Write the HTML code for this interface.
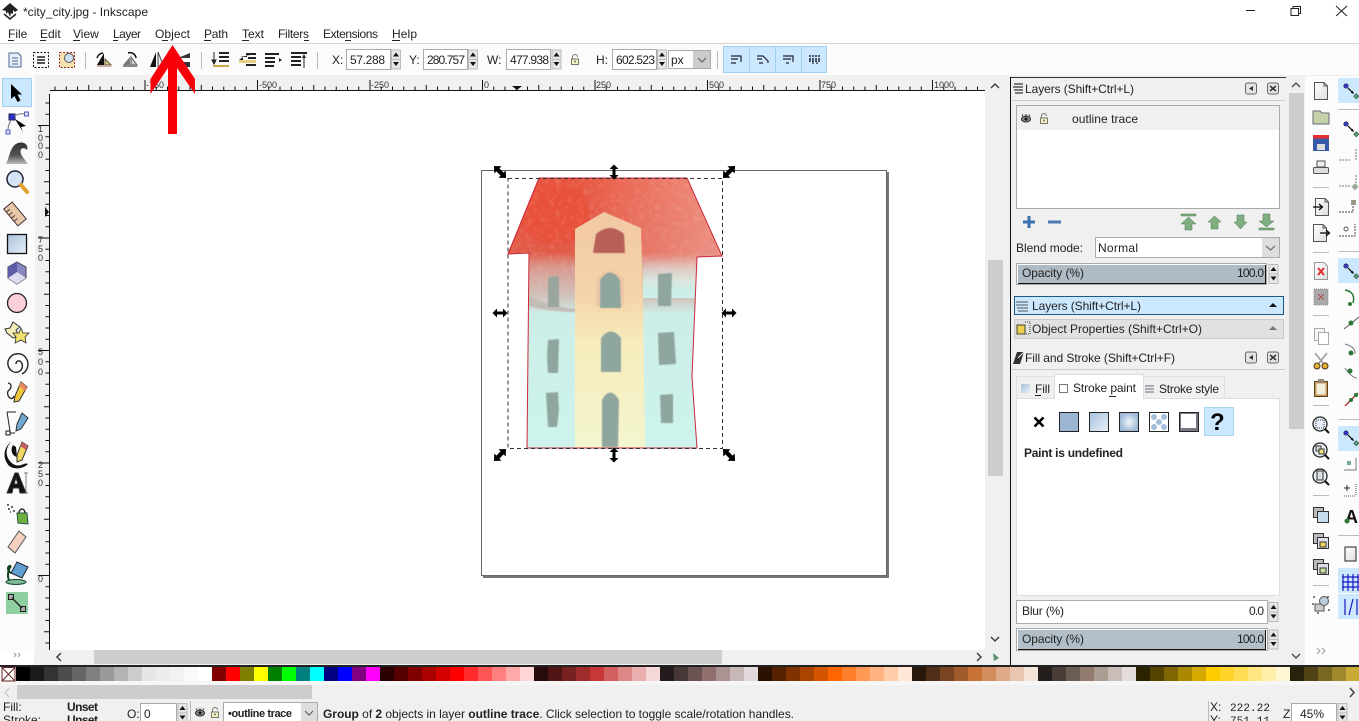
<!DOCTYPE html>
<html><head><meta charset="utf-8"><title>Inkscape</title>
<style>
html,body{margin:0;padding:0;background:#fff;width:1359px;height:721px;overflow:hidden}
svg{display:block;position:absolute;left:0;top:0}
text{font-family:"Liberation Sans",sans-serif;font-size:12px;fill:#222}
.m{font-family:"Liberation Mono",monospace;font-size:11px}
.b{font-weight:bold}
.r{font-size:9px;fill:#333}
</style></head><body>
<svg width="1359" height="721" viewBox="0 0 1359 721" xmlns="http://www.w3.org/2000/svg">
<defs>
<pattern id="pt" x="482" y="76" width="112.5" height="15" patternUnits="userSpaceOnUse">
<path d="M.5 4V14M11.75 10.5V14M23 10.5V14M34.25 10.5V14M45.5 10.5V14M56.75 9V14M68 10.5V14M79.25 10.5V14M90.5 10.5V14M101.75 10.5V14" stroke="#111" fill="none"/>
</pattern>
<pattern id="pl" x="35" y="575" width="15" height="112.5" patternUnits="userSpaceOnUse">
<path d="M3 .5H14M10.5 11.75H14M10.5 23H14M10.5 34.25H14M10.5 45.5H14M9 56.75H14M10.5 68H14M10.5 79.25H14M10.5 90.5H14M10.5 101.75H14" stroke="#111" fill="none"/>
</pattern>
<linearGradient id="gBlue" x1="0" y1="0" x2="1" y2="1"><stop offset="0" stop-color="#a9c1dc"/><stop offset="1" stop-color="#e8f0f8"/></linearGradient>
<linearGradient id="gGrey" x1="0" y1="0" x2="0" y2="1"><stop offset="0" stop-color="#333"/><stop offset=".6" stop-color="#555"/><stop offset="1" stop-color="#bbb"/></linearGradient>
<linearGradient id="gDoc" x1="0" y1="0" x2="1" y2="1"><stop offset="0" stop-color="#fff"/><stop offset="1" stop-color="#ddd"/></linearGradient>
<radialGradient id="gRad"><stop offset="0" stop-color="#f4f8fc"/><stop offset="1" stop-color="#9db8d6"/></radialGradient>
<linearGradient id="house" x1="0" y1="178" x2="0" y2="450" gradientUnits="userSpaceOnUse">
<stop offset="0" stop-color="#e8563f"/><stop offset=".27" stop-color="#e25a48"/><stop offset=".33" stop-color="#d99a90"/><stop offset=".44" stop-color="#d0c6be"/><stop offset=".5" stop-color="#cdeee8"/><stop offset="1" stop-color="#cdf4ec"/>
</linearGradient>
<linearGradient id="tower" x1="0" y1="212" x2="0" y2="450" gradientUnits="userSpaceOnUse">
<stop offset="0" stop-color="#f2c8a4"/><stop offset=".35" stop-color="#f4d4a8"/><stop offset=".55" stop-color="#f7ecbc"/><stop offset="1" stop-color="#f3f6cf"/>
</linearGradient>
<linearGradient id="fade" x1="0" y1="0" x2="1" y2="0"><stop offset=".35" stop-color="#fff" stop-opacity="0"/><stop offset="1" stop-color="#f8e0d8" stop-opacity=".42"/></linearGradient>
<linearGradient id="rcyan" x1="0" y1="0" x2="0" y2="1"><stop offset="0" stop-color="#cdf0ea" stop-opacity="0"/><stop offset=".6" stop-color="#cdf0ea" stop-opacity=".85"/><stop offset="1" stop-color="#cdf0ea"/></linearGradient>
<filter id="blur" x="-20%" y="-20%" width="140%" height="140%"><feGaussianBlur stdDeviation="1.500"/></filter>
<filter id="soft" x="-20%" y="-20%" width="140%" height="140%"><feGaussianBlur stdDeviation=".6"/></filter>
<filter id="noise" x="0" y="0" width="100%" height="100%"><feTurbulence type="fractalNoise" baseFrequency=".18" numOctaves="3" seed="4"/><feColorMatrix values="0 0 0 0 1 0 0 0 0 .9 0 0 0 0 .85 0 0 0 1.600 -.75"/></filter>
<clipPath id="hclip"><path d="M539 178H687L722 256L697 257L692 377L697 448H527L529 253L508 254Z"/></clipPath>
<g id="spin"><rect x=".5" y=".5" width="9" height="9.5" fill="#e6e6e6" stroke="#bbb"/><rect x=".5" y="10" width="9" height="9.5" fill="#e6e6e6" stroke="#bbb"/><path d="M5 3L8 7H2ZM5 16.500L2 12.500H8Z" fill="#111"/></g>
<g id="hh"><path d="M-7.500 0L-3 -4.500V-1.500H3V-4.500L7.500 0L3 4.500V1.500H-3V4.500Z" fill="#000"/></g>
<g id="hd"><path d="M-10 0L-3.500 -6V-2.500H3.500V-6L10 0L3.500 6V2.500H-3.500V6Z" fill="#000"/></g>
<g id="doc"><path d="M-6.500 -8.500H3L6.500 -5V8.500H-6.500Z" fill="url(#gDoc)" stroke="#555"/><path d="M3 -8.500V-5H6.500" fill="none" stroke="#555"/></g>
<g id="snap"><circle cx="-5" cy="-5" r="2.200" fill="#3838d0" stroke="#223" stroke-width=".7"/><path d="M-3 -3L2 2" stroke="#000" stroke-width="1.200"/><path d="M3 3L-.2 1.800L1.800 -.2Z" fill="#000"/><rect x="3.500" y="3.500" width="3.500" height="3.500" transform="rotate(45 5.250 5.250)" fill="#5fa080" stroke="#253" stroke-width=".7"/></g>
<g id="close"><rect x="-5.500" y="-5.500" width="11" height="11" rx="2" fill="#e4e4e4" stroke="#666"/></g>
<g id="eye"><ellipse cx="0" cy="0" rx="4.500" ry="3" fill="#888" stroke="#222"/><circle r="1.500" fill="#111"/><path d="M-4 -3L-3 -4.500M0 -3.500V-5M4 -3L3 -4.500" stroke="#333"/></g>
<g id="lock"><rect x="-3.500" y="-1" width="7" height="5.500" fill="#f4f0c8" stroke="#776"/><path d="M-2.500 -1V-3A2.500 2.500 0 0 1 2.500 -3" fill="none" stroke="#776"/><circle cy="1.500" r="1" fill="#776"/></g>
</defs>

<!-- base -->
<rect width="1359" height="721" fill="#f0f0f0"/>
<rect width="1359" height="43" fill="#fff"/>
<rect y="43" width="1359" height="1" fill="#d6d6d6"/>
<rect y="44" width="1359" height="31" fill="#fbfbfb"/>
<rect x="0" y="75" width="35" height="590" fill="#fbfbfb"/>
<rect x="35" y="75" width="950" height="16" fill="#f0f0f0"/>
<rect x="35" y="75" width="15" height="590" fill="#f0f0f0"/>
<rect x="50" y="91" width="935" height="559" fill="#fff"/>
<rect x="52" y="76" width="933" height="15" fill="url(#pt)"/>
<rect x="50" y="90" width="935" height="1" fill="#111"/>
<rect x="35" y="94" width="15" height="556" fill="url(#pl)"/>
<rect x="49" y="94" width="1" height="556" fill="#111"/>

<!-- title -->
<g transform="translate(10 11)"><path d="M0 -8L8 -1L5 1L3 -1L3 3L1 2L0 6L-2 1L-4 3L-4 0L-8 -1Z" fill="#222"/><path d="M-6 3L0 8L6 3" fill="none" stroke="#222" stroke-width="1.500"/></g>
<text x="23" y="16" textLength="125">*city_city.jpg - Inkscape</text>

<!-- menu -->
<text x="8" y="38">File</text><rect x="8" y="40" width="6" height="1" fill="#222"/>
<text x="40" y="38">Edit</text><rect x="40" y="40" width="6" height="1" fill="#222"/>
<text x="73" y="38">View</text><rect x="73" y="40" width="7" height="1" fill="#222"/>
<text x="113" y="38" textLength="28">Layer</text><rect x="113" y="40" width="5" height="1" fill="#222"/>
<text x="155" y="38" textLength="35">Object</text><rect x="162" y="40" width="6" height="1" fill="#222"/>
<text x="204" y="38" textLength="24">Path</text><rect x="204" y="40" width="7" height="1" fill="#222"/>
<text x="242" y="38" textLength="22">Text</text><rect x="242" y="40" width="7" height="1" fill="#222"/>
<text x="278" y="38" textLength="31">Filters</text><rect x="304" y="40" width="5" height="1" fill="#222"/>
<text x="323" y="38" textLength="55">Extensions</text><rect x="345" y="40" width="6" height="1" fill="#222"/>
<text x="392" y="38" textLength="25">Help</text><rect x="392" y="40" width="8" height="1" fill="#222"/>
<!-- window controls -->
<path d="M1246 10.500H1255" stroke="#222"/>
<path d="M1291 8.500H1298.500V15.500H1291ZM1293 8V6.500H1300.500V13.500H1299" fill="none" stroke="#222"/>
<path d="M1336 6L1347 16M1347 6L1336 16" stroke="#222"/>

<!-- toolbar icons -->
<g transform="translate(15 60)"><path d="M-6 -7H3L6 -4V7H-6Z" fill="#e8eff8" stroke="#4a6a90"/><path d="M-3 -2H3M-3 1H3M-3 4H3" stroke="#4a6a90"/></g>
<g transform="translate(41 60)"><rect x="-7.500" y="-7.500" width="15" height="15" fill="none" stroke="#111" stroke-dasharray="2 1.500"/><path d="M-4 -3H4M-4 0H4M-4 3H4" stroke="#555" stroke-width="2"/></g>
<g transform="translate(67 60)"><rect x="-7.500" y="-7.500" width="15" height="15" fill="#f7e2b0" stroke="#922" stroke-dasharray="2 1.500"/><circle cx="2" cy="-2" r="4.500" fill="#cfe0f0" stroke="#556"/></g>
<rect x="85" y="52" width="1" height="17" fill="#bbb"/>
<g transform="translate(104 60)"><path d="M-7 5L0 -7V5Z" fill="#111"/><path d="M1 -1L7 5H1Z" fill="#e8cf80" stroke="#553"/><path d="M-7 -2A7 7 0 0 1 -1 -7" fill="none" stroke="#111" stroke-width="1.500"/><rect x="-7" y="5" width="14" height="2" fill="#caa"/></g>
<g transform="translate(130 60)"><path d="M-7 5L0 -3V5Z" fill="#777"/><path d="M1 -3L7 5H1Z" fill="#ccc" stroke="#555"/><path d="M-2 -7A6 6 0 0 1 6 -2" fill="none" stroke="#111" stroke-width="1.500"/><rect x="-7" y="5" width="14" height="2" fill="#888"/></g>
<path d="M150 67L156 52V67Z" fill="#111"/><path d="M158 52L164 67H158Z" fill="#eee" stroke="#444"/>
<path d="M178 58L190 53V58ZM178 62H190V67H178Z" fill="#333"/>
<rect x="201" y="52" width="1" height="17" fill="#bbb"/>
<g fill="#222">
<path d="M214 52V62M212 60L214 64L216 60Z" stroke="#222"/><path d="M219 52H229V54H219ZM219 56H229V58H219ZM219 60H229V62H219Z"/><rect x="213" y="65" width="16" height="2" fill="#c8a848"/>
<path d="M240 57H247V55L250 55M239 60L243 57V60Z"/><path d="M246 53H256V55H246ZM248 57H256V59H248ZM246 64H256V66H246Z"/><rect x="239" y="60" width="17" height="3" fill="#e8cf80"/>
<path d="M265 53H279V55H265ZM265 57H275V59H265ZM265 61H275V63H265ZM265 65H274V67H265Z"/><path d="M277 60H281M279 58L282 60L279 62Z"/>
<path d="M291 52H307V54H291ZM291 56H301V58H291ZM291 60H301V62H291ZM291 64H301V66H291Z"/><path d="M304 56V68" stroke="#222"/><path d="M302 58L304 54L306 58Z"/>
</g>
<rect x="317" y="52" width="1" height="17" fill="#bbb"/>
<text x="332" y="64">X:</text>
<rect x="346.500" y="49.500" width="44" height="20" fill="#fff" stroke="#aaa"/><text x="350" y="64" textLength="35">57.288</text><use href="#spin" x="391" y="49.500"/>
<text x="409" y="64">Y:</text>
<rect x="423.500" y="49.500" width="44" height="20" fill="#fff" stroke="#aaa"/><text x="427" y="64" textLength="38">280.757</text><use href="#spin" x="468" y="49.500"/>
<text x="487" y="64">W:</text>
<rect x="506.500" y="49.500" width="44" height="20" fill="#fff" stroke="#aaa"/><text x="510" y="64" textLength="39">477.938</text><use href="#spin" x="551.500" y="49.500"/>
<use href="#lock" x="575" y="60" />
<text x="596" y="64">H:</text>
<rect x="612.500" y="49.500" width="44" height="20" fill="#fff" stroke="#aaa"/><text x="616" y="64" textLength="39">602.523</text><use href="#spin" x="657" y="49.500"/>
<rect x="668.500" y="50.500" width="42" height="18" fill="#fff" stroke="#aaa"/><rect x="693" y="51" width="17" height="17" fill="#ccc"/><path d="M698 58L702 62L706 58" fill="none" stroke="#555"/><text x="671" y="64">px</text>
<rect x="717" y="51" width="1" height="18" fill="#bbb"/>
<rect x="723.500" y="46.500" width="26" height="26" fill="#cce8ff" stroke="#a0d0f0"/><rect x="749.500" y="46.500" width="26" height="26" fill="#cce8ff" stroke="#a0d0f0"/><rect x="775.500" y="46.500" width="26" height="26" fill="#cce8ff" stroke="#a0d0f0"/><rect x="801.500" y="46.500" width="25" height="26" fill="#cce8ff" stroke="#a0d0f0"/>
<g fill="none" stroke="#223" stroke-width="1.200">
<path d="M731 56H741V62M731 59H738M731 63H736"/><path d="M757 56H763L768 61V63M757 59H762M759 63H763"/><path d="M783 56H793V62M783 59H791M786 63H789"/><path d="M809 56H820M809 59H820M809 61H820" stroke-width="1.500" stroke-dasharray="2 1"/><path d="M813 62V64M817 62V64"/>
</g>

<!-- rulers labels -->
<text class="r" x="146" y="88">-750</text><text class="r" x="259" y="88">-500</text><text class="r" x="371" y="88">-250</text><text class="r" x="484" y="88">0</text><text class="r" x="596" y="88">250</text><text class="r" x="709" y="88">500</text><text class="r" x="821" y="88">750</text><text class="r" x="934" y="88">1000</text>
<path d="M512 86H522L517 90Z" fill="#111"/>
<path d="M45 207L49 212L45 217Z" fill="#111"/>
<g>
<text class="r" x="38" y="132">1</text><text class="r" x="38" y="141">0</text><text class="r" x="38" y="149">0</text><text class="r" x="38" y="158">0</text>
<text class="r" x="38" y="243">7</text><text class="r" x="38" y="252">5</text><text class="r" x="38" y="261">0</text>
<text class="r" x="38" y="355">5</text><text class="r" x="38" y="365">0</text><text class="r" x="38" y="375">0</text>
<text class="r" x="38" y="468">2</text><text class="r" x="38" y="477">5</text><text class="r" x="38" y="486">0</text>
<text class="r" x="38" y="582">0</text>
</g>

<!-- page -->
<rect x="483" y="172" width="406" height="406" fill="#777"/>
<rect x="481.500" y="170.500" width="405" height="405" fill="#fff" stroke="#666"/>

<!-- building -->
<g clip-path="url(#hclip)">
<rect x="500" y="170" width="230" height="285" fill="url(#house)"/>
<rect x="643" y="258" width="60" height="40" fill="url(#rcyan)"/>
<path d="M529 296Q550 306 576 309V312Q550 312 529 306Z" fill="#c2bdb6" filter="url(#soft)"/>
<rect x="500" y="170" width="230" height="115" fill="url(#fade)"/>
<ellipse cx="555" cy="215" rx="35" ry="30" fill="#ec4a30" opacity=".45" filter="url(#blur)"/>
<rect x="500" y="178" width="230" height="110" filter="url(#noise)" opacity=".22"/>
<path d="M575 229L604 212L641 228L643 300L645 450H575Z" fill="url(#tower)"/>
<g filter="url(#soft)">
<path d="M596 306V280Q610 262 624 280V306Z" fill="#ecc8a6"/>
<g fill="#8fa69f">
<path d="M548 277L559 276V307H548Z" fill="#9aa59d"/><path d="M548 340L559 339L558 373H548L547 358Z"/><path d="M546 393L558 392L559 410L557 427H548Z"/>
<path d="M658 274L672 273L671 306H658Z"/><path d="M658 333L674 332L676 364L659 365Z"/><path d="M660 395L673 394L673 423L661 423Z"/>
<path d="M600 308V280Q610 265 620 280L621 308Z"/><path d="M601 372V338Q611 325 621 338V372Z"/><path d="M602 447V400Q610 385 619 400L618 447Z"/>
</g>
<path d="M593 253L596 234Q610 222 624 234L625 253Z" fill="#b85e5a"/>
</g>
</g>
<path d="M539 178H687L722 256L697 257L692 377L697 448H527L529 253L508 254Z" fill="none" stroke="#c9283c"/>
<rect x="508" y="178.500" width="214.500" height="270" fill="none" stroke="#333" stroke-dasharray="4 3"/>
<use href="#hd" transform="translate(500 172) rotate(45) scale(.85)"/><use href="#hd" transform="translate(729 172) rotate(-45) scale(.85)"/><use href="#hd" transform="translate(500 455) rotate(-45) scale(.85)"/><use href="#hd" transform="translate(729 455) rotate(45) scale(.85)"/>
<use href="#hh" transform="translate(614 172) rotate(90)"/><use href="#hh" transform="translate(614 455) rotate(90)"/><use href="#hh" transform="translate(500 313)"/><use href="#hh" transform="translate(729 313)"/>

<!-- left tools -->
<rect x="2.500" y="78.500" width="29" height="28" fill="#cce8ff" stroke="#a0d0f0"/>
<path d="M11 84V99L14.500 96L17.500 102L20.500 100.500L17.500 94.500H22Z" fill="#000"/>
<rect x="9" y="114" width="6" height="6" fill="#3030d0" stroke="#225"/><rect x="24.500" y="112" width="4" height="4" fill="#dde" stroke="#55c"/><rect x="6" y="130" width="4" height="4" fill="#dde" stroke="#55c"/><path d="M14 116Q20 113 25 114M11 120Q8 125 8 130" fill="none" stroke="#778"/><path d="M15 119L26 126L21 127L23 132Z" fill="#000"/>
<path d="M6 164C10 156 10 146 18 143C24 141 29 145 27 150C23 146 18 149 22 156L28 164Z" fill="url(#gGrey)"/>
<circle cx="15" cy="179" r="8" fill="#d5e5f5" stroke="#223" stroke-width="1.500"/><path d="M21 185L27 192" stroke="#e0a030" stroke-width="4" stroke-linecap="round"/>
<g transform="translate(15 214) rotate(-40)"><rect x="-5.500" y="-11" width="11" height="22" fill="#e8c8a8" stroke="#433"/><path d="M-5 -7H-1M-5 -3H-1M-5 1H-1M-5 5H-1" stroke="#433"/></g>
<rect x="7.500" y="234.500" width="19" height="19" fill="url(#gBlue)" stroke="#111" stroke-width="1.300"/>
<path d="M17 262L26 267V278L17 284L8 278V267Z" fill="#8888c0" stroke="#445"/><path d="M17 272L26 278L17 284L8 278Z" fill="#dde" /><path d="M17 262V272L8 278V267Z" fill="#5c5ca8"/>
<circle cx="17" cy="303" r="9.500" fill="#fbd0d8" stroke="#222" stroke-width="1.300"/>
<path d="M13 322L20 327L16 330L19 336L13 338L7 333L5 329L10 328Z" fill="#f3eeb8" stroke="#333"/>
<path d="M21 328L23 333L29 333L25 337L26 343L21 340L15 343L16 337L13 333H19Z" fill="#f2e070" stroke="#333" stroke-width=".8"/>
<path d="M16 364A3 3 0 0 1 20 361A6 6 0 0 1 12 371A9 9 0 0 1 9 359A10 10 0 0 1 26 358A11 11 0 0 1 22 374" fill="none" stroke="#222" stroke-width="1.400"/>
<path d="M8 383C13 384 11 389 8 391C6 396 12 402 14 396" fill="none" stroke="#222" stroke-width="1.300"/><path d="M21 382L27 387L19 401L14 402L15 396Z" fill="#f0c840" stroke="#333"/><path d="M21 382L27 387L25 391L19 386Z" fill="#e88860"/>
<path d="M7 412L16 412M7 412L10 431" fill="none" stroke="#222"/><rect x="6" y="431" width="4" height="4" fill="#fff" stroke="#111"/><path d="M10 433H15" stroke="#222"/><path d="M22 413L28 418L21 429L16 431L17 424Z" fill="#6ea8d0" stroke="#333"/>
<path d="M12 441C4 448 5 460 15 465C22 467 24 462 28 464C22 470 10 470 7 463C2 455 5 446 12 441Z" fill="#111"/><path d="M13 445C10 450 12 456 17 457L16 447Z" fill="#111"/><path d="M22 442L28 446L22 460L17 462L17 455Z" fill="#f0d860" stroke="#333"/><path d="M22 442L28 446L26 450L20 446Z" fill="#c06060"/>
<path d="M7 493L15 473H18L26 493H20L19 488H13L12 493ZM14 484H18L16 478Z" fill="#111" stroke="#333"/><path d="M24 473H28M26 473V493M24 493H28" stroke="#555" stroke-width=".7" fill="none"/>
<path d="M7 505H9M11 507H13M8 509H10M13 511H15M10 512H11" stroke="#333" stroke-width="1.500"/><path d="M17 513H27L28 524L18 523Z" fill="#70b040" stroke="#254"/><path d="M19 513A3 4 0 0 1 25 513" fill="none" stroke="#333" stroke-width="1.500"/>
<path d="M19 531L26 537L15 553L8 547Z" fill="#f6d0c0" stroke="#555"/>
<ellipse cx="16" cy="582" rx="10" ry="2.500" fill="#80b898" stroke="#142"/><path d="M17 562L28 567L22 578L11 573Z" fill="#5fa0d0" stroke="#223"/><path d="M11 573C7 571 7 565 11 566M11 566C8 570 7 576 9 580" fill="none" stroke="#142" stroke-width="2"/>
<rect x="6" y="592" width="22" height="22" fill="#90d0a0"/><rect x="8.500" y="594.500" width="5" height="5" fill="#aaa" stroke="#222"/><rect x="20.500" y="606.500" width="5" height="5" fill="#aaa" stroke="#222"/><path d="M12 598L22 608" stroke="#222" stroke-width="1.300"/>

<!-- canvas scrollbars -->
<rect x="985" y="76" width="20" height="590" fill="#f0f0f0"/>
<rect x="988" y="260" width="15" height="216" fill="#cdcdcd"/>
<path d="M991 88L995 84L999 88M991 637L995 641L999 637" fill="none" stroke="#333" stroke-width="1.300"/>
<rect x="0" y="650" width="34" height="16" fill="#fff"/>
<path d="M14 653L16 655L14 657M18 653L20 655L18 657" fill="none" stroke="#999"/>
<rect x="34" y="650" width="950" height="16" fill="#f0f0f0"/>
<rect x="94" y="650" width="628" height="14" fill="#cdcdcd"/>
<path d="M61 653L57 657L61 661M977 653L981 657L977 661" fill="none" stroke="#444" stroke-width="1.500"/>
<path d="M993 653L999 658L994 661Z" fill="#5a9070"/>

<!-- dock -->
<rect x="1005" y="76" width="354" height="1" fill="#eee"/>
<rect x="1010" y="77" width="1" height="589" fill="#111"/>
<rect x="1011" y="77" width="275" height="1" fill="#333"/>
<path d="M1014 84H1023M1013 87H1023M1014 90H1023M1015 93H1023" stroke="#555" stroke-width="1.500"/>
<text x="1025" y="93" textLength="109">Layers (Shift+Ctrl+L)</text>
<use href="#close" x="1251" y="88.500"/><path d="M1253 86V91L1249 88.500Z" fill="#333"/>
<use href="#close" x="1273" y="88.500"/><path d="M1270 86L1276 91M1276 86L1270 91" stroke="#333" stroke-width="1.500"/>
<rect x="1012" y="100" width="273" height="1" fill="#ccc"/>
<rect x="1016.500" y="105.500" width="263" height="103" fill="#fff" stroke="#aaa"/>
<rect x="1017" y="106" width="262" height="24" fill="#f0f0f0"/>
<use href="#eye" x="1026" y="119"/><use href="#lock" x="1044" y="119"/>
<text x="1072" y="123" textLength="66">outline trace</text>
<path d="M1029 216V228M1023 222H1035" stroke="#3b70b0" stroke-width="3"/>
<path d="M1048 222H1061" stroke="#4a7ab0" stroke-width="3"/>
<g fill="#7fae80" stroke="#4c7a50" stroke-width=".5">
<path d="M1181 214H1196V216H1181ZM1188.500 217L1196 224H1192V230H1185V224H1181Z"/>
<path d="M1214.500 216L1221 222H1218V229H1211V222H1208Z"/>
<path d="M1237 215H1244V222H1247L1240.500 229L1234 222H1237Z"/>
<path d="M1263 214H1270V221H1274L1266.500 227L1259 221H1263ZM1259 228H1274V230H1259Z"/>
</g>
<text x="1016" y="252" textLength="67">Blend mode:</text>
<rect x="1095.500" y="237.500" width="184" height="20" fill="#fff" stroke="#aaa"/><rect x="1262" y="238" width="17" height="19" fill="#ddd"/><path d="M1266 246L1270.500 250L1275 246" fill="none" stroke="#555"/>
<text x="1098" y="252" textLength="40">Normal</text>
<rect x="1016.500" y="263.500" width="250" height="21" fill="#fff" stroke="#aaa"/>
<rect x="1018" y="265" width="248" height="18" fill="#aebac4"/>
<path d="M1018 283.500H1266M1265.500 265V283" stroke="#111"/>
<text x="1022" y="277" textLength="62">Opacity (%)</text><text x="1237" y="277" textLength="27">100.0</text>
<use href="#spin" x="1268.500" y="264"/>
<rect x="1014.500" y="296.500" width="269" height="18" fill="#cce8ff" stroke="#1c5a85"/>
<path d="M1016 302H1028M1016 305H1028M1017 308H1028M1018 311H1028" stroke="#555"/>
<text x="1032" y="310" textLength="109">Layers (Shift+Ctrl+L)</text><path d="M1269 307L1273 303L1277 307Z" fill="#111"/>
<rect x="1014.500" y="319.500" width="269" height="19" fill="#e1e1e1" stroke="#ccc"/>
<rect x="1017" y="325" width="8" height="9" fill="#e8cf50" stroke="#443"/><path d="M1025 322H1030V334H1025" fill="none" stroke="#444" stroke-dasharray="1 1"/>
<text x="1032" y="333" textLength="170">Object Properties (Shift+Ctrl+O)</text><path d="M1269 330L1273 326L1277 330Z" fill="#777"/>

<!-- fill and stroke -->
<path d="M1013 364L1017 352H1024L1020 364Z" fill="#333"/><path d="M1018 358L1024 352" stroke="#eee"/>
<text x="1025" y="362" textLength="150">Fill and Stroke (Shift+Ctrl+F)</text>
<use href="#close" x="1251" y="357.500"/><path d="M1253 355V360L1249 357.500Z" fill="#333"/>
<use href="#close" x="1273" y="357.500"/><path d="M1270 355L1276 360M1276 355L1270 360" stroke="#333" stroke-width="1.500"/>
<rect x="1012" y="369" width="273" height="1" fill="#ccc"/>
<rect x="1016.500" y="376.500" width="38" height="23" fill="#f0f0f0" stroke="#e0e0e0"/>
<rect x="1143.500" y="376.500" width="81" height="23" fill="#f0f0f0" stroke="#e0e0e0"/>
<rect x="1016.500" y="398.500" width="263" height="197" fill="#fff" stroke="#ddd"/>
<path d="M1054.500 399V374.500H1143.500V399" fill="#fff" stroke="#ddd"/><rect x="1055" y="398" width="88" height="2" fill="#fff"/>
<rect x="1021" y="384" width="9" height="9" fill="url(#gBlue)"/>
<text x="1035" y="393" textLength="15">Fill</text><rect x="1035" y="395" width="6" height="1" fill="#222"/>
<rect x="1059.500" y="384.500" width="8" height="8" fill="#fff" stroke="#777"/>
<text x="1073" y="392" textLength="63">Stroke paint</text><rect x="1109" y="396" width="7" height="1" fill="#222"/>
<path d="M1145 386H1154M1145 389H1154M1145 392H1154" stroke="#667" stroke-width="1"/>
<text x="1159" y="393" textLength="60">Stroke style</text>
<path d="M1034.500 417.500L1043.500 426.500M1043.500 417.500L1034.500 426.500" stroke="#000" stroke-width="2.500"/>
<rect x="1059.500" y="412.500" width="19" height="19" fill="#9bb5d2" stroke="#222"/>
<rect x="1089.500" y="412.500" width="19" height="19" fill="url(#gBlue)" stroke="#222"/>
<rect x="1119.500" y="412.500" width="19" height="19" fill="url(#gRad)" stroke="#222"/>
<rect x="1149.500" y="412.500" width="19" height="19" fill="#fff" stroke="#222"/>
<g fill="#a5bfdc"><circle cx="1154" cy="417" r="3"/><circle cx="1164" cy="417" r="3"/><circle cx="1159" cy="422" r="3"/><circle cx="1154" cy="427" r="3"/><circle cx="1164" cy="427" r="3"/></g>
<rect x="1179.500" y="412.500" width="19" height="19" fill="#778" stroke="#222"/><rect x="1181" y="414" width="15" height="14" fill="#fff"/>
<rect x="1204.500" y="407.500" width="29" height="28" fill="#cce8ff" stroke="#a8d4f0"/>
<text x="1210" y="430" class="b" style="font-size:24px;fill:#000">?</text>
<text x="1024" y="457" class="b" textLength="99">Paint is undefined</text>
<rect x="1016.500" y="600.500" width="251" height="23" fill="#fff" stroke="#aaa"/>
<text x="1022" y="615" textLength="42">Blur (%)</text><text x="1249" y="615" textLength="15">0.0</text>
<use href="#spin" x="1268.500" y="602"/>
<rect x="1016.500" y="628.500" width="251" height="22" fill="#fff" stroke="#aaa"/>
<rect x="1018" y="630" width="248" height="19" fill="#b2bfc9"/>
<path d="M1018 649.500H1266M1265.500 630V649" stroke="#111"/>
<text x="1022" y="643" textLength="62">Opacity (%)</text><text x="1237" y="643" textLength="27">100.0</text>
<use href="#spin" x="1268.500" y="629.500"/>

<!-- dock scrollbar -->
<rect x="1289" y="93" width="15" height="336" fill="#cdcdcd"/>
<path d="M1292 87L1296 83L1300 87M1292 654L1296 658L1300 654" fill="none" stroke="#444" stroke-width="1.300"/>

<!-- right bars -->
<rect x="1305" y="76" width="54" height="590" fill="#fcfcfc"/>
<use href="#doc" x="1321" y="91"/>
<path d="M1313 111H1320L1322 113H1329V124H1313Z" fill="#c5d2a8" stroke="#667"/>
<rect x="1313" y="135" width="16" height="16" fill="#3858a8"/><rect x="1313" y="135" width="16" height="3.500" fill="#e83030"/><rect x="1317" y="144" width="8" height="6" fill="#ddd"/>
<path d="M1317 161H1325V167H1317Z" fill="#eee" stroke="#555"/><rect x="1313.500" y="167.500" width="15" height="6" rx="1" fill="#ddd" stroke="#555"/>
<rect x="1313" y="187" width="16" height="1" fill="#bbb"/>
<use href="#doc" x="1322" y="207"/><path d="M1313 207H1322M1319 204L1322.500 207L1319 210" fill="none" stroke="#000" stroke-width="1.200"/>
<use href="#doc" x="1320" y="233"/><path d="M1320 233H1329M1326 230L1329.500 233L1326 236" fill="none" stroke="#000" stroke-width="1.200"/>
<rect x="1313" y="252" width="16" height="1" fill="#bbb"/>
<path d="M1314.500 262.500H1324L1327.500 266V279.500H1314.500Z" fill="url(#gDoc)" stroke="#999"/><path d="M1318 268L1324 275M1324 268L1318 275" stroke="#e03030" stroke-width="2"/>
<rect x="1314" y="289" width="14" height="16" fill="#aaa" stroke="#888" stroke-dasharray="1 1"/><path d="M1318 294L1324 300M1324 294L1318 300" stroke="#a55"/>
<rect x="1313" y="315" width="16" height="1" fill="#bbb"/>
<rect x="1314.500" y="328.500" width="10" height="12" fill="#f4f4f4" stroke="#aaa"/><rect x="1318.500" y="332.500" width="10" height="12" fill="#fff" stroke="#aaa"/>
<path d="M1315 353L1323 363M1327 353L1319 363" stroke="#999" stroke-width="1.500"/><circle cx="1317" cy="366" r="3" fill="#e8b030" stroke="#432"/><circle cx="1325" cy="366" r="3" fill="#e8b030" stroke="#432"/>
<rect x="1314.500" y="381.500" width="13" height="15" fill="#c89858" stroke="#542"/><rect x="1316.500" y="383.500" width="9" height="11" fill="#f4f0e0"/><rect x="1318" y="379" width="6" height="4" fill="#987"/>
<rect x="1313" y="405" width="16" height="1" fill="#bbb"/>
<circle cx="1320" cy="424" r="7" fill="#e8f0f8" stroke="#222" stroke-width="1.300"/><rect x="1316" y="420" width="8" height="8" fill="none" stroke="#333" stroke-dasharray="1 1"/><path d="M1325 429L1329 433" stroke="#111" stroke-width="2"/>
<circle cx="1320" cy="450" r="7" fill="#e8f0f8" stroke="#222" stroke-width="1.300"/><rect x="1316" y="446" width="5" height="5" fill="#ddd" stroke="#333"/><rect x="1319" y="449" width="5" height="5" fill="#f0e080" stroke="#333"/><path d="M1325 455L1329 459" stroke="#111" stroke-width="2"/>
<circle cx="1320" cy="476" r="7" fill="#e8f0f8" stroke="#222" stroke-width="1.300"/><rect x="1317" y="471" width="6" height="9" fill="#ddd" stroke="#333"/><path d="M1325 481L1329 485" stroke="#111" stroke-width="2"/>
<rect x="1313" y="495" width="16" height="1" fill="#bbb"/>
<rect x="1313.500" y="507.500" width="10" height="10" fill="#bbb" stroke="#333"/><rect x="1317.500" y="511.500" width="11" height="11" fill="#c8dcf0" stroke="#333"/>
<rect x="1313.500" y="533.500" width="10" height="10" fill="#bbb" stroke="#333"/><rect x="1317.500" y="537.500" width="11" height="11" fill="#dde" stroke="#333"/><rect x="1320" y="542" width="6" height="5" fill="#f0d860" stroke="#332"/>
<rect x="1313.500" y="559.500" width="10" height="10" fill="#bbb" stroke="#333"/><rect x="1317.500" y="563.500" width="11" height="11" fill="#dde" stroke="#333"/><rect x="1320" y="568" width="6" height="5" fill="#c8e0a0" stroke="#332"/>
<rect x="1313" y="585" width="16" height="1" fill="#bbb"/>
<rect x="1313" y="597" width="16" height="16" fill="none" stroke="#000" stroke-dasharray="2 12"/><rect x="1315" y="604" width="9" height="7" fill="#ccc" stroke="#555"/><circle cx="1324" cy="601" r="4.500" fill="#bcd" stroke="#555"/>
<path d="M1317 648L1320 651L1317 654M1322 648L1325 651L1322 654" fill="none" stroke="#999"/>

<!-- snap -->
<rect x="1338" y="78" width="22" height="25" fill="#cce8ff"/><use href="#snap" x="1351" y="91"/>
<rect x="1338" y="109" width="21" height="1" fill="#bbb"/>
<use href="#snap" x="1351" y="129"/>
<path d="M1339 160H1351M1356 149V160" stroke="#777" stroke-dasharray="2 1"/>
<path d="M1339 186H1351M1356 175V186" stroke="#777" stroke-dasharray="2 1"/><rect x="1353" y="184" width="5" height="5" transform="rotate(45 1355 186)" fill="#9a9"/>
<path d="M1339 212H1353V200" fill="none" stroke="#444" stroke-dasharray="2 1"/><rect x="1351" y="200" width="5" height="5" fill="#998"/>
<circle cx="1346" cy="229" r="2" fill="#fff" stroke="#555"/><path d="M1339 236H1355V224" fill="none" stroke="#444" stroke-dasharray="2 1"/>
<rect x="1338" y="251" width="21" height="1" fill="#bbb"/>
<rect x="1338" y="258" width="22" height="25" fill="#cce8ff"/><use href="#snap" x="1351" y="271"/>
<path d="M1345 290Q1356 292 1353 303" fill="none" stroke="#287838" stroke-width="1.500"/><circle cx="1350" cy="304" r="2" fill="#287838"/>
<path d="M1344 329L1359 317" stroke="#555"/><circle cx="1351" cy="323" r="2.500" fill="#287838"/>
<path d="M1345 344Q1356 347 1355 354" fill="none" stroke="#777"/><circle cx="1351" cy="353" r="2.500" fill="#287838"/>
<path d="M1345 368Q1352 378 1357 378" fill="none" stroke="#777"/><circle cx="1350" cy="371" r="2.500" fill="#287838"/>
<path d="M1345 406L1358 393" stroke="#c03040" stroke-width="1.500"/><circle cx="1351" cy="400" r="2" fill="#287838"/><circle cx="1356" cy="395" r="2" fill="#287838"/>
<rect x="1338" y="419" width="21" height="1" fill="#bbb"/>
<rect x="1338" y="426" width="22" height="25" fill="#cce8ff"/><use href="#snap" x="1351" y="438"/>
<rect x="1347" y="461" width="4" height="4" fill="#7a9" /><path d="M1344 470H1356V458" fill="none" stroke="#777"/>
<path d="M1344 488H1350M1347 485V491" stroke="#222"/><path d="M1344 496H1355M1356 484V496" stroke="#555" stroke-dasharray="1 1" fill="none"/>
<text x="1345" y="523" class="b" style="font-size:18px;fill:#111">A</text><circle cx="1347" cy="521" r="2.500" fill="#287838"/>
<rect x="1338" y="535" width="21" height="1" fill="#bbb"/>
<rect x="1345" y="547" width="11" height="14" fill="url(#gDoc)" stroke="#222"/>
<rect x="1338" y="568" width="22" height="25" fill="#cce8ff"/>
<path d="M1343 574V591M1348 574V591M1353 574V591M1358 574V591M1342 577H1359M1342 582H1359M1342 587H1359" stroke="#1818c0" stroke-width="1.200"/>
<rect x="1338" y="594" width="22" height="25" fill="#cce8ff"/>
<path d="M1345 599V615M1349 615L1353 599M1357 599V615" stroke="#1818c0" stroke-width="1.200"/>

<!-- palette -->
<rect x="0" y="665" width="1359" height="2" fill="#222"/>
<rect x="0" y="667" width="1359" height="18" fill="#fff"/>
<rect x="0" y="681" width="1359" height="4" fill="#f6f6f6"/>
<path d="M2 667.500H15V681H2ZM2 667.500L15 681M15 667.500L2 681" fill="#fff" stroke="#622"/>
<g transform="translate(16 667)" shape-rendering="crispEdges">
<rect x="0" width="14" height="14" fill="#000000"/><rect x="14" width="14" height="14" fill="#1a1a1a"/><rect x="28" width="14" height="14" fill="#333333"/><rect x="42" width="14" height="14" fill="#4d4d4d"/><rect x="56" width="14" height="14" fill="#666666"/><rect x="70" width="14" height="14" fill="#808080"/><rect x="84" width="14" height="14" fill="#999999"/><rect x="98" width="14" height="14" fill="#b3b3b3"/><rect x="112" width="14" height="14" fill="#cccccc"/><rect x="126" width="14" height="14" fill="#e6e6e6"/><rect x="140" width="14" height="14" fill="#ececec"/><rect x="154" width="14" height="14" fill="#f2f2f2"/><rect x="168" width="14" height="14" fill="#f9f9f9"/><rect x="182" width="14" height="14" fill="#ffffff"/>
<rect x="196" width="14" height="14" fill="#800000"/><rect x="210" width="14" height="14" fill="#ff0000"/><rect x="224" width="14" height="14" fill="#808000"/><rect x="238" width="14" height="14" fill="#ffff00"/><rect x="252" width="14" height="14" fill="#008000"/><rect x="266" width="14" height="14" fill="#00ff00"/><rect x="280" width="14" height="14" fill="#008080"/><rect x="294" width="14" height="14" fill="#00ffff"/><rect x="308" width="14" height="14" fill="#000080"/><rect x="322" width="14" height="14" fill="#0000ff"/><rect x="336" width="14" height="14" fill="#800080"/><rect x="350" width="14" height="14" fill="#ff00ff"/>
<rect x="364" width="14" height="14" fill="#2b0000"/><rect x="378" width="14" height="14" fill="#550000"/><rect x="392" width="14" height="14" fill="#800000"/><rect x="406" width="14" height="14" fill="#aa0000"/><rect x="420" width="14" height="14" fill="#d40000"/><rect x="434" width="14" height="14" fill="#ff0000"/><rect x="448" width="14" height="14" fill="#ff2a2a"/><rect x="462" width="14" height="14" fill="#ff5555"/><rect x="476" width="14" height="14" fill="#ff8080"/><rect x="490" width="14" height="14" fill="#ffaaaa"/><rect x="504" width="14" height="14" fill="#ffd5d5"/>
<rect x="518" width="14" height="14" fill="#280b0b"/><rect x="532" width="14" height="14" fill="#501616"/><rect x="546" width="14" height="14" fill="#782121"/><rect x="560" width="14" height="14" fill="#a02c2c"/><rect x="574" width="14" height="14" fill="#c83737"/><rect x="588" width="14" height="14" fill="#d35f5f"/><rect x="602" width="14" height="14" fill="#de8787"/><rect x="616" width="14" height="14" fill="#e9afaf"/><rect x="630" width="14" height="14" fill="#f4d7d7"/>
<rect x="644" width="14" height="14" fill="#241c1c"/><rect x="658" width="14" height="14" fill="#483737"/><rect x="672" width="14" height="14" fill="#6c5353"/><rect x="686" width="14" height="14" fill="#916f6f"/><rect x="700" width="14" height="14" fill="#ac9393"/><rect x="714" width="14" height="14" fill="#c8b7b7"/><rect x="728" width="14" height="14" fill="#e3dbdb"/>
<rect x="742" width="14" height="14" fill="#2b1100"/><rect x="756" width="14" height="14" fill="#552200"/><rect x="770" width="14" height="14" fill="#803300"/><rect x="784" width="14" height="14" fill="#aa4400"/><rect x="798" width="14" height="14" fill="#d45500"/><rect x="812" width="14" height="14" fill="#ff6600"/><rect x="826" width="14" height="14" fill="#ff7f2a"/><rect x="840" width="14" height="14" fill="#ff9955"/><rect x="854" width="14" height="14" fill="#ffb380"/><rect x="868" width="14" height="14" fill="#ffccaa"/><rect x="882" width="14" height="14" fill="#ffe6d5"/>
<rect x="896" width="14" height="14" fill="#28170b"/><rect x="910" width="14" height="14" fill="#502d16"/><rect x="924" width="14" height="14" fill="#784421"/><rect x="938" width="14" height="14" fill="#a05a2c"/><rect x="952" width="14" height="14" fill="#c87137"/><rect x="966" width="14" height="14" fill="#d38d5f"/><rect x="980" width="14" height="14" fill="#deaa87"/><rect x="994" width="14" height="14" fill="#e9c6af"/><rect x="1008" width="14" height="14" fill="#f4e3d7"/>
<rect x="1022" width="14" height="14" fill="#241f1c"/><rect x="1036" width="14" height="14" fill="#483e37"/><rect x="1050" width="14" height="14" fill="#6c5d53"/><rect x="1064" width="14" height="14" fill="#917c6f"/><rect x="1078" width="14" height="14" fill="#ac9d93"/><rect x="1092" width="14" height="14" fill="#c8beb7"/><rect x="1106" width="14" height="14" fill="#e3dedb"/>
<rect x="1120" width="14" height="14" fill="#2b2200"/><rect x="1134" width="14" height="14" fill="#554400"/><rect x="1148" width="14" height="14" fill="#806600"/><rect x="1162" width="14" height="14" fill="#aa8800"/><rect x="1176" width="14" height="14" fill="#d4aa00"/><rect x="1190" width="14" height="14" fill="#ffcc00"/><rect x="1204" width="14" height="14" fill="#ffd42a"/><rect x="1218" width="14" height="14" fill="#ffdd55"/><rect x="1232" width="14" height="14" fill="#ffe680"/><rect x="1246" width="14" height="14" fill="#ffeeaa"/><rect x="1260" width="14" height="14" fill="#fff6d5"/>
<rect x="1274" width="14" height="14" fill="#28220b"/><rect x="1288" width="14" height="14" fill="#504416"/><rect x="1302" width="14" height="14" fill="#786721"/><rect x="1316" width="14" height="14" fill="#a0892c"/><rect x="1330" width="14" height="14" fill="#c8ab37"/>
</g>
<rect x="0" y="685" width="1359" height="14" fill="#f0f0f0"/>
<rect x="17" y="685" width="295" height="14" fill="#cdcdcd"/>
<path d="M9 688L5 692.500L9 697" fill="none" stroke="#ccc" stroke-width="1.500"/>
<path d="M1350 688L1354 692.500L1350 697" fill="none" stroke="#444" stroke-width="1.500"/>

<!-- status -->
<text x="3" y="711">Fill:</text><text x="3" y="724">Stroke:</text>
<text x="67" y="711" class="b" textLength="31">Unset</text><text x="67" y="724" class="b" textLength="31">Unset</text>
<text x="127" y="718">O:</text>
<rect x="140.500" y="703.500" width="36" height="20" fill="#fff" stroke="#aaa"/><text x="144" y="718">0</text>
<use href="#spin" x="177.500" y="703"/>
<rect x="190" y="701" width="1" height="20" fill="#bbb"/>
<use href="#eye" x="200" y="713"/><use href="#lock" x="215" y="713"/>
<rect x="223.500" y="702.500" width="94" height="20" fill="#fff" stroke="#aaa"/><rect x="301" y="703" width="16" height="18" fill="#ddd"/><path d="M305 711L309 715L313 711" fill="none" stroke="#555"/>
<text x="228" y="717" class="b" style="font-size:11px" textLength="64">•outline trace</text>
<text x="323" y="718" textLength="471"><tspan class="b">Group</tspan> of <tspan class="b">2</tspan> objects in layer <tspan class="b">outline trace</tspan>. Click selection to toggle scale/rotation handles.</text>
<rect x="1208" y="701" width="1" height="20" fill="#bbb"/>
<text x="1210" y="711">X:</text><text x="1210" y="724">Y:</text>
<text x="1230" y="711" class="m" textLength="40">222.22</text><text x="1230" y="724" class="m" textLength="40">751.11</text>
<text x="1283" y="718">Z:</text>
<rect x="1291.500" y="703.500" width="45" height="20" fill="#fff" stroke="#aaa"/><text x="1300" y="718">45%</text>
<use href="#spin" x="1337.500" y="703"/>

<!-- red arrow -->
<path d="M172.500 45L195 79V94L177 68V134H168V68L150.500 94V79Z" fill="#f8000a"/>
</svg>
</body></html>
